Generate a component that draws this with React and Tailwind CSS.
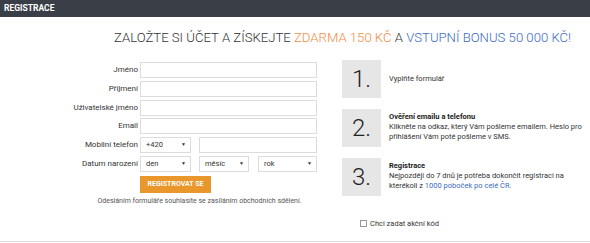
const font = { fontFamily: "Roboto, 'Noto Sans', Arial, sans-serif" }

const Field = ({ label }) => (
  <div className="flex items-center h-[16px] mb-[2.75px]">
    <label className="w-[140px] pr-[2px] text-right text-[8px] text-[#333]">{label}</label>
    <div className="w-[177px] h-[16px] border border-[#dcdcdc] bg-white" />
  </div>
)

const Select = ({ value, w }) => (
  <div className={`${w} h-[16px] border border-[#dcdcdc] bg-white flex items-center justify-between pl-[5px] pr-[4px] text-[7.5px] text-[#333]`}>
    <span>{value}</span>
    <span className="text-[5px]">▼</span>
  </div>
)

const Step = ({ n, title, children }) => (
  <div className="flex mb-[11px]">
    <div className="w-[39px] h-[38px] bg-[#e6e6e6] flex items-center justify-center text-[24px] font-light text-[#222] shrink-0">
      {n}.
    </div>
    <div className={`ml-[8px] text-[7.5px] leading-[10px] text-[#333] whitespace-nowrap ${title ? "pt-[3px]" : "flex items-center"}`}>
      {title && <p className="font-bold text-[#222]">{title}</p>}
      <div>{children}</div>
    </div>
  </div>
)

export default function App() {
  return (
    <div className="w-[590px] h-[243px] bg-white overflow-hidden" style={font}>
      <div className="h-[17px] bg-[#3a3f47] flex items-center px-[4px]">
        <span className="text-white font-bold text-[8.5px]">REGISTRACE</span>
      </div>

      <div className="h-[225px] border-b border-[#dddddd]">
        <h1 className="pt-[12px] pl-[114px] text-[13.15px] font-light leading-[18px] text-[#333] whitespace-nowrap">
          ZALOŽTE SI ÚČET A ZÍSKEJTE <span className="text-[#f28c3f]">ZDARMA 150 KČ</span> A{" "}
          <span className="text-[#3d6bbf]">VSTUPNÍ BONUS 50 000 KČ!</span>
        </h1>

        <div className="flex mt-[13px]">
          <div className="w-[342px] pt-[2px]">
            <Field label="Jméno" />
            <Field label="Příjmení" />
            <Field label="Uživatelské jméno" />
            <Field label="Email" />
            <div className="flex items-center h-[16px] mb-[2.75px]">
              <label className="w-[140px] pr-[2px] text-right text-[8px] text-[#333]">Mobilní telefon</label>
              <Select value="+420" w="w-[51px]" />
              <div className="ml-[8px] w-[118px] h-[16px] border border-[#dcdcdc]" />
            </div>
            <div className="flex items-center h-[16px]">
              <label className="w-[140px] pr-[2px] text-right text-[8px] text-[#333]">Datum narození</label>
              <Select value="den" w="w-[51px]" />
              <div className="ml-[8px]"><Select value="měsíc" w="w-[50px]" /></div>
              <div className="ml-[9px]"><Select value="rok" w="w-[59px]" /></div>
            </div>
            <button className="block ml-[140px] mt-[4px] w-[71px] h-[17px] bg-[#e9962b] text-white font-bold text-[7px]">
              REGISTROVAT SE
            </button>
            <p className="ml-[79px] w-[241px] mt-[3px] text-center text-[7px] leading-[10px] text-[#555] whitespace-nowrap">
              Odesláním formuláře souhlasíte se zasíláním obchodních sdělení.
            </p>
          </div>

          <div>
            <Step n="1">Vyplňte formulář</Step>
            <Step n="2" title="Ověření emailu a telefonu">
              Klikněte na odkaz, který Vám pošleme emailem. Heslo pro<br />
              přihlášení Vám poté pošleme v SMS.
            </Step>
            <Step n="3" title="Registrace">
              Nejpozději do 7 dnů je potřeba dokončit registraci na<br />
              kterékoli z <span className="text-[#3d6bbf]">1000 poboček po celé ČR.</span>
            </Step>
            <label className="flex items-center ml-[18px] mt-[22px] text-[7.5px] text-[#333]">
              <span className="w-[7px] h-[7px] border border-[#999] bg-white mr-[3px]" />
              Chci zadat akční kód
            </label>
          </div>
        </div>
      </div>
    </div>
  )
}
